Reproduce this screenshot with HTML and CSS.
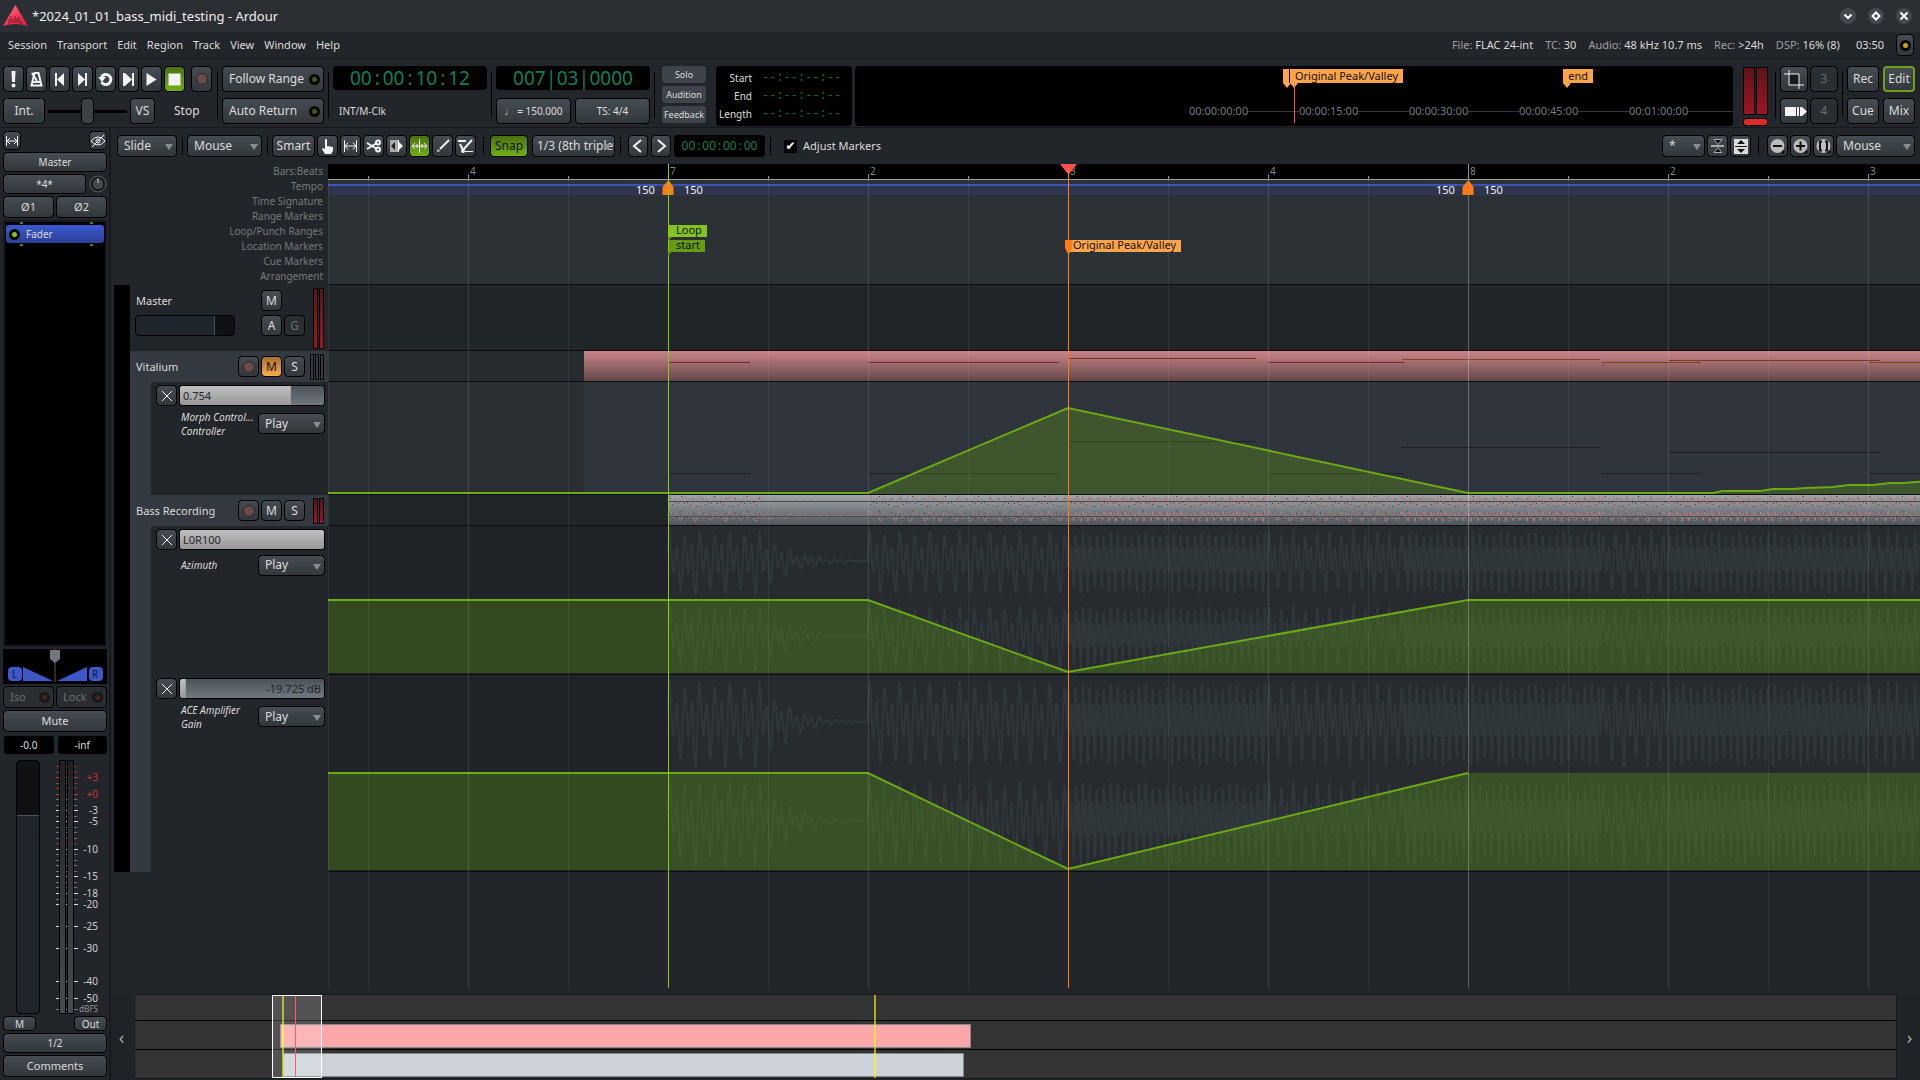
FILE: index.html
```html
<!DOCTYPE html>
<html lang="en">
<head>
    <meta charset="UTF-8">
    <meta name="viewport" content="width=device-width, initial-scale=1.0">
    <title>*2024_01_01_bass_midi_testing - Ardour</title>
    <link rel="stylesheet" href="styles.css">
</head>
<body>
    <header class="titlebar">
        <svg class="logo" width="25" height="22" viewBox="0 0 25 22">
            <defs>
                <linearGradient id="logoFill" x1="0" y1="0" x2="1" y2="1">
                    <stop offset="0" stop-color="#ff8c94"/>
                    <stop offset="0.5" stop-color="#f43a55"/>
                    <stop offset="1" stop-color="#c9213f"/>
                </linearGradient>
            </defs>
            <path d="M12.500 0L25 21Q12 17 0 21Z" fill="url(#logoFill)"/>
            <path d="M6 19v-5M8 18v-7M10 18v-4M12 18v-7M14 18v-5M16 18v-6M18 19v-3" stroke="#7d1528" stroke-width="1"/>
        </svg>
        <h1>*2024_01_01_bass_midi_testing - Ardour</h1>
        <div class="window-buttons">
            <button aria-label="Minimize"><svg width="16" height="16"><path d="M4.500 6.500L8 10l3.500-3.500"/></svg></button>
            <button aria-label="Maximize"><svg width="16" height="16"><path d="M8 4.500L11.500 8 8 11.500 4.500 8Z"/></svg></button>
            <button aria-label="Close"><svg width="16" height="16"><path d="M4.500 4.500l7 7M11.500 4.500l-7 7"/></svg></button>
        </div>
    </header>

    <div class="menubar">
        <nav>
            <a href="#">Session</a>
            <a href="#">Transport</a>
            <a href="#">Edit</a>
            <a href="#">Region</a>
            <a href="#">Track</a>
            <a href="#">View</a>
            <a href="#">Window</a>
            <a href="#">Help</a>
        </nav>
        <div class="status">
            <span><i>File:</i> FLAC 24-int</span>
            <span><i>TC:</i> 30</span>
            <span><i>Audio:</i> 48 kHz 10.7 ms</span>
            <span><i>Rec:</i> &gt;24h</span>
            <span><i>DSP:</i> 16% (8)</span>
            <span class="wall-clock">03:50</span>
            <button class="btn log-btn" aria-label="Log"><span class="led yellow"></span></button>
        </div>
    </div>

    <section class="transport">
        <div class="stack transport-main">
            <div class="line transport-buttons">
                <button class="btn ico" aria-label="Panic"><svg width="20" height="24"><path class="w" d="M7.500 4h4l-.5 11h-3z"/><circle class="w" cx="9.500" cy="18.500" r="2"/></svg></button>
                <button class="btn ico" aria-label="Metronome"><svg width="20" height="24"><path class="s2" d="M4.500 18.500L7.500 6h4l3 12.500zM6 15h7M10 14L5 6"/></svg></button>
                <button class="btn ico" aria-label="Go to start"><svg width="20" height="24"><path class="w" d="M5 6h2v13H5zM14 6v13l-7-6.500z"/></svg></button>
                <button class="btn ico" aria-label="Go to end"><svg width="20" height="24"><path class="w" d="M12 6h2v13h-2zM5 6v13l7-6.500z"/></svg></button>
                <button class="btn ico" aria-label="Loop"><svg width="20" height="24"><path class="s3" d="M5.500 10a5 5 0 1 1 0 5"/><path class="w" d="M2 10h8l-4 5z"/></svg></button>
                <button class="btn ico" aria-label="Play range"><svg width="20" height="24"><path class="w" d="M4 6h2v13H4zM13 6h2v13h-2zM6 6v13l7-6.500z"/></svg></button>
                <button class="btn ico" aria-label="Play"><svg width="20" height="24"><path class="w" d="M4.500 6v13L14.500 12.500z"/></svg></button>
                <button class="btn ico on" aria-label="Stop"><svg width="20" height="24"><path class="w" d="M3.500 6.500h12v12h-12z"/></svg></button>
                <button class="btn ico rec" aria-label="Record"><span class="rec-dot"></span></button>
            </div>
            <div class="line">
                <button class="btn int">Int.</button>
                <input class="shuttle" type="range" aria-label="Shuttle">
                <button class="btn vs">VS</button>
                <span class="state">Stop</span>
            </div>
        </div>
        <div class="sep"></div>
        <div class="stack follow">
            <button class="btn led-btn">Follow Range<span class="led dim"></span></button>
            <button class="btn led-btn">Auto Return<span class="led dim"></span></button>
        </div>
        <div class="sep"></div>
        <div class="stack clock-col">
            <div class="clock big"><b>00</b><b>:</b><b>00</b><b>:</b><b>10</b><b>:</b><b>12</b></div>
            <span class="sync">INT/M-Clk</span>
        </div>
        <div class="sep"></div>
        <div class="stack clock-col">
            <div class="clock big"><b>007</b><b>|</b><b>03</b><b>|</b><b>0000</b></div>
            <div class="line">
                <button class="btn small wide">♩ = 150.000</button>
                <button class="btn small wide">TS: 4/4</button>
            </div>
        </div>
        <div class="sep"></div>
        <div class="alerts">
            <button>Solo</button>
            <button>Audition</button>
            <button>Feedback</button>
        </div>
        <dl class="punch">
            <dt>Start</dt><dd>--:--:--:--</dd>
            <dt>End</dt><dd>--:--:--:--</dd>
            <dt>Length</dt><dd>--:--:--:--</dd>
        </dl>
        <div class="timeline-overview">
            <div class="ticks">
                <span>00:00:00:00</span>
                <span>00:00:15:00</span>
                <span>00:00:30:00</span>
                <span>00:00:45:00</span>
                <span>00:01:00:00</span>
            </div>
            <span class="flag stub" style="right: 444px"></span>
            <span class="flag" style="right: 330px">Original Peak/Valley</span>
            <span class="flag" style="right: 140px">end</span>
            <span class="playhead-mini"></span>
        </div>
        <div class="master-meter">
            <span></span><span></span>
            <button aria-label="Reset peak"></button>
        </div>
        <div class="sep"></div>
        <div class="square-grid">
            <button class="btn" aria-label="Crop"><svg width="26" height="24"><path fill="#181a1c" d="M8 7h10v11H8z"/><path class="s1" d="M8 3v15h15M3 7h15v15"/></svg></button>
            <button class="btn off">3</button>
            <button class="btn" aria-label="Range"><svg width="26" height="24"><path class="w" d="M4 8h11v9H4zM16 8h2v9h-2zM19 8h2v9h-2zM21 8l5 4.500-5 4.500z"/></svg></button>
            <button class="btn off">4</button>
        </div>
        <div class="sep"></div>
        <div class="mode-grid">
            <button class="btn">Rec</button>
            <button class="btn current">Edit</button>
            <button class="btn">Cue</button>
            <button class="btn">Mix</button>
        </div>
    </section>

    <div class="workspace">
        <aside class="strip">
            <div class="line spread">
                <button class="btn tiny" aria-label="Width"><svg width="16" height="16"><path class="s1" d="M2.500 3v10M13.500 3v10M3 8h10M6 5L3 8l3 3M10 5l3 3-3 3"/></svg></button>
                <button class="btn tiny" aria-label="Hide"><svg width="16" height="16"><path class="s1" d="M1 8q7-8 14 0-7 8-14 0M2 14L14 2"/><circle class="s1" cx="8" cy="8" r="2"/></svg></button>
            </div>
            <button class="btn h20">Master</button>
            <div class="line trim">
                <button class="btn h20">*4*</button>
                <svg width="18" height="18"><circle cx="9" cy="9" r="8" fill="none" stroke="#565b60" stroke-width="1"/><circle cx="9" cy="9" r="6" fill="#44494e" stroke="#000"/><path d="M9 3v5" stroke="#ccc"/></svg>
            </div>
            <div class="line halves">
                <button class="btn">Ø1</button>
                <button class="btn">Ø2</button>
            </div>
            <div class="processors">
                <div class="pins"><i></i><i></i></div>
                <button class="processor"><span class="led green"></span>Fader</button>
                <div class="pins"><i></i><i></i></div>
            </div>
            <svg class="panner" width="104" height="35">
                <path d="M52 0v33" stroke="#2a2a2a" stroke-width="2"/>
                <path d="M20 18L50 32H20zM84 18L54 32H84z" fill="#3e57c9"/>
                <rect x="5" y="18" width="14" height="14" rx="4" fill="#3e57c9"/>
                <rect x="86" y="18" width="14" height="14" rx="4" fill="#3e57c9"/>
                <path d="M47 1h10v9l-5 4-5-4z" fill="#70777e"/>
                <text x="9" y="29">L</text>
                <text x="89" y="29">R</text>
            </svg>
            <div class="line halves">
                <button class="btn off led-btn">Iso<span class="led red"></span></button>
                <button class="btn off led-btn">Lock<span class="led red"></span></button>
            </div>
            <button class="btn">Mute</button>
            <div class="line peaks">
                <output>-0.0</output>
                <output>-inf</output>
            </div>
            <div class="fader-row">
                <input type="range" class="main-fader" min="0" max="100" value="79" aria-label="Master gain">
                <svg class="meter-scale" id="meterScale" width="60" height="254"></svg>
            </div>
            <div class="line spread foot">
                <button class="btn mini">M</button>
                <button class="btn mini">Out</button>
            </div>
            <button class="btn h20">1/2</button>
            <button class="btn">Comments</button>
        </aside>

        <main class="editor">
            <div class="toolbar">
                <label class="dropdown slide"><select aria-label="Edit mode"><option>Slide</option></select></label>
                <div class="sep"></div>
                <label class="dropdown point"><select aria-label="Edit point"><option>Mouse</option></select></label>
                <div class="sep"></div>
                <div class="tools">
                    <button class="btn smart">Smart</button>
                    <button class="btn ico" aria-label="Grab"><svg width="20" height="20"><path class="w" d="M7 3h2v7l6 1v4l-2 3H7l-3-5 1-1 2 1z"/></svg></button>
                    <button class="btn ico" aria-label="Range"><svg width="20" height="20"><path class="s1" d="M3.500 4v12M15.500 4v12M4 10h11M7 6.500L4 10l3 3.500M12 6.500l3 3.500-3 3.500"/></svg></button>
                    <button class="btn ico" aria-label="Cut"><svg width="20" height="20"><path class="s2" d="M3 7l10 6M3 13l10-6"/><circle class="s2" cx="14" cy="6.500" r="2"/><circle class="s2" cx="14" cy="13.500" r="2"/></svg></button>
                    <button class="btn ico" aria-label="Stretch"><svg width="20" height="20"><path fill="#aaa" d="M3 4h8v12H3z"/><path fill="#222" d="M4 10l4-4v8z"/><path class="w" d="M11 4h1v12h-1zM12 6l4 4-4 4z"/></svg></button>
                    <button class="btn ico on" aria-label="Internal edit"><svg width="20" height="20"><path class="s1" d="M9.500 3v14M2 10h15M5 7l-3 3 3 3M14 7l3 3-3 3M7 8v4M12 8v4"/></svg></button>
                    <button class="btn ico" aria-label="Draw"><svg width="20" height="20"><path class="s2" d="M7 13l9-9"/><path class="w" d="M4 16l1-3 2 2z"/></svg></button>
                    <button class="btn ico" aria-label="Automation"><svg width="20" height="20"><path class="s2" d="M2 5h8M4 8l3 6 9-10"/><path class="s1" d="M9 15.500h8"/><circle class="w" cx="7" cy="15" r="2"/></svg></button>
                </div>
                <div class="sep"></div>
                <button class="btn on snap">Snap</button>
                <label class="dropdown snap-grid"><select aria-label="Grid"><option>1/3 (8th triplet</option></select></label>
                <div class="sep"></div>
                <div class="nudge">
                    <button class="btn" aria-label="Nudge back"><svg width="18" height="20"><path class="s2" d="M12 4l-7 6 7 6"/></svg></button>
                    <button class="btn" aria-label="Nudge forward"><svg width="18" height="20"><path class="s2" d="M6 4l7 6-7 6"/></svg></button>
                    <div class="clock"><b>00</b><b>:</b><b>00</b><b>:</b><b>00</b><b>:</b><b>00</b></div>
                </div>
                <div class="sep"></div>
                <label class="check"><input type="checkbox" checked>Adjust Markers</label>
                <div class="toolbar-right">
                    <label class="dropdown star"><select aria-label="Visible tracks"><option>*</option></select></label>
                    <button class="btn ico" aria-label="Shrink tracks"><svg width="20" height="20"><path fill="#aaa" d="M3 9h13v2H3z"/><path fill="#111" stroke="#aaa" d="M6 3.500h8l-4 5zM6 16.500h8l-4-5z"/></svg></button>
                    <button class="btn ico" aria-label="Expand tracks"><svg width="20" height="20"><path fill="#ddd" d="M3 3h14v15H3z"/><path fill="#111" d="M6 8h8l-4-4zM6 13h8l-4 4zM4 10h12v1H4z"/></svg></button>
                    <div class="sep"></div>
                    <button class="btn ico" aria-label="Zoom out"><svg width="20" height="20"><path stroke="#111" stroke-width="3" d="M13 14l3 3"/><circle cx="9.500" cy="10" r="7" fill="#bbb"/><path stroke="#111" stroke-width="2" d="M5 10h9"/></svg></button>
                    <button class="btn ico" aria-label="Zoom in"><svg width="20" height="20"><path stroke="#111" stroke-width="3" d="M13 14l3 3"/><circle cx="9.500" cy="10" r="7" fill="#bbb"/><path stroke="#111" stroke-width="2" d="M5 10h9M9.500 5.500v9"/></svg></button>
                    <button class="btn ico" aria-label="Zoom to session"><svg width="20" height="20"><path stroke="#111" stroke-width="3" d="M13 14l3 3"/><circle cx="9.500" cy="10" r="7" fill="#bbb"/><path stroke="#111" stroke-width="2" fill="none" d="M8 5.500H6v9h2M11 5.500h2v9h-2"/></svg></button>
                    <label class="dropdown focus"><select aria-label="Zoom focus"><option>Mouse</option></select></label>
                </div>
            </div>

            <div class="canvas">
                <div class="row rulers">
                    <div class="head ruler-names">
                        <span>Bars:Beats</span>
                        <span>Tempo</span>
                        <span>Time Signature</span>
                        <span>Range Markers</span>
                        <span>Loop/Punch Ranges</span>
                        <span>Location Markers</span>
                        <span>Cue Markers</span>
                        <span>Arrangement</span>
                    </div>
                    <div class="lane">
                        <div class="bars"></div>
                        <div class="tempo"></div>
                    </div>
                </div>

                <div class="row master">
                    <div class="head tabbed">
                        <div class="track-title">
                            <span class="name">Master</span>
                            <button class="btn sq last">M</button>
                        </div>
                        <div class="track-title second">
                            <input type="range" class="track-fader" aria-label="Master fader">
                            <button class="btn sq">A</button>
                            <button class="btn sq off">G</button>
                        </div>
                        <div class="meters hot"><i></i><i></i></div>
                    </div>
                    <div class="lane"></div>
                </div>

                <div class="row track">
                    <div class="head tabbed selected">
                        <div class="track-title">
                            <span class="name">Vitalium</span>
                            <button class="btn sq" aria-label="Record enable"><span class="rec-dot"></span></button>
                            <button class="btn sq muted">M</button>
                            <button class="btn sq">S</button>
                        </div>
                        <div class="meters"><i></i><i></i><i></i></div>
                    </div>
                    <div class="lane vitalium">
                        <svg id="midiLane"></svg>
                    </div>
                </div>

                <div class="row morph">
                    <div class="head tabbed selected">
                        <div class="auto">
                            <button class="btn sq" aria-label="Hide lane"><svg width="18" height="18"><path class="s1" d="M4 4l10 10M14 4L4 14"/></svg></button>
                            <input type="text" class="value" style="--fill: 77%" value="0.754" aria-label="Morph Control value">
                            <p>Morph Control...<br>Controller</p>
                            <label class="dropdown"><select aria-label="Morph automation mode"><option>Play</option></select></label>
                        </div>
                    </div>
                    <div class="lane">
                        <svg id="morphLane"></svg>
                    </div>
                </div>

                <div class="row track">
                    <div class="head tabbed selected">
                        <div class="track-title">
                            <span class="name">Bass Recording</span>
                            <button class="btn sq" aria-label="Record enable"><span class="rec-dot"></span></button>
                            <button class="btn sq">M</button>
                            <button class="btn sq">S</button>
                        </div>
                        <div class="meters hot"><i></i><i></i></div>
                    </div>
                    <div class="lane">
                        <svg id="bassLane"></svg>
                    </div>
                </div>

                <div class="row azimuth">
                    <div class="head tabbed selected">
                        <div class="auto one-line">
                            <button class="btn sq" aria-label="Hide lane"><svg width="18" height="18"><path class="s1" d="M4 4l10 10M14 4L4 14"/></svg></button>
                            <input type="text" class="value" style="--fill: 100%" value="L0R100" aria-label="Azimuth value">
                            <p>Azimuth</p>
                            <label class="dropdown"><select aria-label="Azimuth automation mode"><option>Play</option></select></label>
                        </div>
                    </div>
                    <div class="lane">
                        <svg id="azimuthLane"></svg>
                    </div>
                </div>

                <div class="row gain">
                    <div class="head tabbed selected">
                        <div class="auto">
                            <button class="btn sq" aria-label="Hide lane"><svg width="18" height="18"><path class="s1" d="M4 4l10 10M14 4L4 14"/></svg></button>
                            <input type="text" class="value right" style="--fill: 4%" value="-19.725 dB" aria-label="Amplifier gain value">
                            <p>ACE Amplifier<br>Gain</p>
                            <label class="dropdown"><select aria-label="Gain automation mode"><option>Play</option></select></label>
                        </div>
                    </div>
                    <div class="lane">
                        <svg id="gainLane"></svg>
                    </div>
                </div>

                <!-- grid, markers and playhead lie over all lanes -->
                <div class="overlay" id="overlay">
                    <svg id="gridLines"></svg>
                    <span class="tempo-label before" style="--x: 340px">150</span>
                    <span class="tempo-label" style="--x: 340px">150</span>
                    <span class="tempo-label before" style="--x: 1140px">150</span>
                    <span class="tempo-label" style="--x: 1140px">150</span>
                    <span class="marker loop" style="--x: 340px">Loop</span>
                    <span class="marker start" style="--x: 340px">start</span>
                    <span class="marker location" style="--x: 740px">Original Peak/Valley</span>
                    <svg class="top" id="playhead"></svg>
                </div>
            </div>

            <div class="summary">
                <button aria-label="Scroll left">‹</button>
                <div class="map">
                    <div></div>
                    <div><span class="clip pink"></span></div>
                    <div><span class="clip pale"></span></div>
                    <i class="edge" style="left: 147px"></i>
                    <i class="edge" style="left: 739px"></i>
                    <i class="now"></i>
                    <span class="view"></span>
                </div>
                <button aria-label="Scroll right">›</button>
            </div>
        </main>
    </div>

    <script src="script.js"></script>
</body>
</html>
```
FILE: styles.css
```css
* {
    box-sizing: border-box;
}

body {
    margin: 0;
    height: 100vh;
    display: flex;
    flex-direction: column;
    overflow: hidden;
    background: #222529;
    color: #dcdcdc;
    font: 12px/16px "Noto Sans", sans-serif;
}

button, input, select {
    font: inherit;
    color: inherit;
    margin: 0;
    padding: 0;
    border: 0;
}

a {
    color: inherit;
    text-decoration: none;
}

svg {
    display: block;
}

.w { fill: #f2f2f2; }
.s1, .s2, .s3 { fill: none; stroke: #f2f2f2; stroke-width: 1; }
.s2 { stroke-width: 2; }
.s3 { stroke-width: 3; }

/* title and menu */

.titlebar {
    display: flex;
    align-items: center;
    height: 32px;
    flex: none;
    padding: 0 8px 0 3px;
    background: #2b2e32;
}

.titlebar h1 {
    flex: 1;
    margin: 0 0 0 4px;
    font-size: 13px;
    font-weight: 400;
    color: #f0f0f0;
}

.window-buttons {
    display: flex;
    gap: 12px;
}

.window-buttons button {
    width: 16px;
    height: 16px;
    border-radius: 8px;
    background: #42484d;
}

.window-buttons path {
    fill: none;
    stroke: #fff;
    stroke-width: 2;
}

.menubar {
    display: flex;
    justify-content: space-between;
    align-items: center;
    height: 27px;
    flex: none;
    padding: 0 6px 0 8px;
    border-bottom: 1px solid #15171a;
    font-size: 11px;
}

.menubar nav {
    display: flex;
    gap: 10px;
}

.status {
    display: flex;
    align-items: center;
    gap: 12px;
}

.status i {
    font-style: normal;
    color: #a0a0a0;
}

.wall-clock {
    margin-left: 4px;
}

.log-btn {
    width: 18px;
    height: 22px;
}

/* buttons */

.btn {
    display: flex;
    align-items: center;
    justify-content: center;
    height: 22px;
    border: 1px solid #000;
    border-radius: 4px;
    background: linear-gradient(#464c53, #32373b);
    white-space: nowrap;
}

.btn.on {
    background: linear-gradient(#49720f, #70b016);
    color: #111;
}

.btn.off {
    background: #2a2e31;
    color: #6a6e72;
}

.btn.muted {
    background: linear-gradient(#a8702f, #ffa94d);
    color: #111;
}

.btn.current {
    border: 2px solid #6da01c;
}

.btn.small {
    font-size: 10px;
}

.btn.tiny {
    width: 18px;
    height: 19px;
}

.btn.sq {
    flex: none;
    width: 21px;
    height: 21px;
}

.rec-dot {
    width: 12px;
    height: 12px;
    border: 1px solid #2a2020;
    border-radius: 6px;
    background: #6b4c4c;
}

.led-btn {
    justify-content: space-between;
    padding: 0 3px 0 6px;
}

.led {
    width: 11px;
    height: 11px;
    border: 3px solid #050505;
    border-radius: 6px;
    background: #3f5e10;
}

.led.yellow { background: #d0a800; }
.led.green { background: #86c81c; }
.led.red { background: #4a2224; border-color: #181818; }

.sep {
    flex: none;
    width: 1px;
    background: #000;
}

.line {
    display: flex;
    align-items: center;
}

.spread {
    justify-content: space-between;
}

.dropdown {
    position: relative;
    display: block;
    height: 22px;
}

.dropdown select {
    width: 100%;
    height: 100%;
    padding: 0 6px;
    appearance: none;
    border: 1px solid #000;
    border-radius: 4px;
    background: linear-gradient(#464c53, #32373b);
}

.dropdown::after {
    content: "";
    position: absolute;
    right: 4px;
    top: 9px;
    border: 4px solid transparent;
    border-top: 6px solid #8a8d90;
    border-bottom: 0;
    pointer-events: none;
}

/* transport */

.transport {
    display: flex;
    flex: none;
    height: 69px;
    padding: 7px 5px 3px 3px;
    border-bottom: 1px solid #15171a;
}

.transport .sep {
    height: 46px;
    margin: 6px 4px 0;
}

.transport .btn {
    height: 26px;
}

.stack {
    display: flex;
    flex-direction: column;
    gap: 6px;
}

.transport-main {
    width: 210px;
}

.transport-buttons {
    gap: 2px;
}

.ico {
    width: 21px;
}

.transport-buttons .rec {
    margin-left: 4px;
}

.int { width: 42px; }
.vs { width: 25px; }

.shuttle {
    width: 79px;
    height: 26px;
    margin: 0 3px;
    appearance: none;
    background: linear-gradient(#000, #000) center / 100% 3px no-repeat;
}

.shuttle::-webkit-slider-thumb {
    appearance: none;
    width: 13px;
    height: 26px;
    border: 1px solid #000;
    border-radius: 4px;
    background: #3c4147;
}

.state {
    margin-left: 19px;
}

.follow {
    width: 102px;
}

.clock-col {
    width: 154px;
}

.clock {
    display: flex;
    align-items: center;
    justify-content: center;
    border-radius: 4px;
    background: #000;
    color: #0e7f5c;
}

.clock b {
    font-weight: 400;
    min-width: 7px;
    text-align: center;
}

.clock.big {
    height: 24px;
    font-size: 19px;
}

.clock.big b {
    min-width: 11px;
}

.sync {
    margin: 7px 0 0 6px;
    font-size: 10px;
}

.clock-col .clock + .line {
    gap: 4px;
    margin-top: 2px;
}

.wide {
    flex: 1;
}

.alerts {
    display: flex;
    flex-direction: column;
    gap: 3px;
    width: 44px;
    margin-left: 3px;
}

.alerts button {
    height: 17px;
    border-radius: 3px;
    background: #3f444a;
    font-size: 9px;
}

.punch {
    display: grid;
    grid-template-columns: 36px 1fr;
    column-gap: 10px;
    align-items: center;
    width: 136px;
    height: 60px;
    margin: 0 3px 0 10px;
    padding: 3px 0;
    border-radius: 4px;
    background: #000;
    font-size: 10px;
}

.punch dt {
    text-align: right;
}

.punch dd {
    margin: 0;
    font: 12px/16px "Liberation Mono", monospace;
    color: #0b6b4d;
}

.timeline-overview {
    position: relative;
    flex: 1;
    height: 60px;
    border-radius: 4px;
    background: #000;
    overflow: hidden;
}

.timeline-overview .ticks {
    display: flex;
    justify-content: flex-end;
    margin-top: 37px;
    color: #75797c;
    font-size: 11px;
}

.ticks span {
    display: flex;
    align-items: center;
    width: 110px;
}

.ticks span:last-child {
    width: 104px;
}

.ticks span::after {
    content: "";
    flex: 1;
    height: 1px;
    background: #33373a;
}

.flag {
    position: absolute;
    top: 3px;
    height: 14px;
    padding: 0 5px;
    background: #ffa44a;
    color: #111;
    font-size: 11px;
    line-height: 13px;
}

.flag::after {
    content: "";
    position: absolute;
    left: 0;
    top: 14px;
    border: 4px solid transparent;
    border-top: 5px solid #ffa44a;
    border-bottom: 0;
}

.flag.stub {
    width: 6px;
    padding: 0;
}

.playhead-mini {
    position: absolute;
    right: 438px;
    top: 19px;
    width: 1px;
    height: 38px;
    background: #ff524e;
}

.master-meter {
    display: grid;
    grid-template: 48px 8px / 12px 12px;
    gap: 3px 1px;
    margin: 1px 3px 0 10px;
}

.master-meter span {
    border: 1px solid #000;
    background: linear-gradient(#5c1418, #a01424);
}

.master-meter button {
    grid-column: span 2;
    border: 1px solid #000;
    border-radius: 3px;
    background: #e02a2a;
}

.square-grid, .mode-grid {
    display: grid;
    grid-template-columns: 28px 28px;
    gap: 6px 2px;
    align-content: start;
}

.mode-grid {
    grid-template-columns: 32px 32px;
    gap: 6px 4px;
}

/* mixer strip */

.workspace {
    display: flex;
    flex: 1;
    min-height: 0;
}

.strip {
    display: flex;
    flex-direction: column;
    gap: 2px;
    width: 111px;
    flex: none;
    padding: 3px 2px 3px 3px;
    border-right: 2px solid #17191c;
    font-size: 11px;
}

.strip .h20 {
    height: 20px;
    font-size: 10px;
}

.trim .btn {
    flex: 1;
    margin-right: 3px;
}

.halves {
    gap: 2px;
}

.halves .btn {
    flex: 1;
    min-width: 0;
}

.processors {
    flex: 1;
    display: flex;
    flex-direction: column;
    gap: 1px;
    padding: 0 1px;
    border: 2px solid #17191c;
    background: #000;
}

.pins {
    display: flex;
    justify-content: space-between;
    padding: 0 11px 0 14px;
}

.pins i {
    width: 3px;
    height: 2px;
    background: #4a8a10;
}

.processor {
    display: flex;
    align-items: center;
    gap: 6px;
    height: 18px;
    padding: 0 3px;
    border-radius: 3px;
    background: linear-gradient(#3a59d0, #2b3f96);
    font-size: 10px;
}

.panner {
    background: #000;
    fill: #0c1640;
    font-size: 10px;
}

.peaks {
    gap: 4px;
    padding: 2px 0 0 1px;
}

.peaks output {
    flex: 1;
    height: 18px;
    border-radius: 3px;
    background: #000;
    font-size: 10px;
    line-height: 18px;
    text-align: center;
}

.fader-row {
    display: flex;
    gap: 12px;
    padding: 4px 0 0 13px;
}

.main-fader {
    width: 24px;
    height: 254px;
    appearance: none;
    writing-mode: vertical-lr;
    direction: rtl;
    border: 1px solid #000;
    border-radius: 4px;
    background: linear-gradient(#101112 54px, #4a525c 54px, #4a525c 55px, #20252c 55px);
}

.main-fader::-webkit-slider-thumb, .track-fader::-webkit-slider-thumb {
    appearance: none;
    width: 1px;
    height: 1px;
}

.meter-scale {
    font-size: 10px;
}

.btn.mini {
    width: 33px;
    height: 15px;
    font-size: 10px;
}

/* editor toolbar */

.editor {
    display: flex;
    flex-direction: column;
    flex: 1;
    min-width: 0;
}

.toolbar {
    display: flex;
    gap: 4px;
    height: 36px;
    flex: none;
    padding: 7px 5px 0 6px;
}

.toolbar .sep {
    height: 18px;
    margin: 2px 0 0 1px;
}

.slide { width: 60px; }
.point { width: 75px; }
.smart { width: 43px; }
.snap { width: 38px; margin-left: 2px; }
.snap-grid { width: 83px; }
.star { width: 43px; }
.focus { width: 79px; }

.snap-grid select {
    padding: 0 0 0 4px;
}

.tools {
    display: flex;
    gap: 2px;
    margin-right: 2px;
}

.nudge {
    display: flex;
    gap: 3px;
    margin-left: 3px;
}

.nudge .btn {
    width: 20px;
}

.nudge .clock {
    width: 91px;
    height: 22px;
}

.check {
    display: flex;
    align-items: center;
    gap: 6px;
    height: 22px;
    margin-left: 9px;
    font-size: 11px;
}

.check input {
    appearance: none;
    width: 13px;
    height: 13px;
    background: #000;
}

.check input:checked::before {
    content: "✔";
    display: block;
    font: 12px/13px "DejaVu Sans", sans-serif;
    color: #fff;
    text-align: center;
}

.toolbar-right {
    display: flex;
    gap: 2px;
    margin-left: auto;
}

.toolbar-right .sep {
    margin: 2px 6px 0 5px;
}

/* canvas */

.canvas {
    position: relative;
    flex: 1;
    min-height: 0;
    padding-left: 3px;
}

.row {
    display: grid;
    grid-template-columns: 214px 1fr;
}

.rulers { height: 121px; }
.master { height: 66px; }
.track { height: 31px; }
.morph { height: 113px; }
.azimuth { height: 149px; }
.gain { height: 197px; }

.lane {
    border-bottom: 1px solid #0c0d0e;
    background: #202528;
    overflow: hidden;
}

.lane svg {
    width: 100%;
    height: 100%;
}

.rulers .lane { background: #2c3135; }
.lane.vitalium { background: #262b2f; }
.morph .lane { background: #2b2f33; }
.azimuth .lane, .gain .lane { background: #202327; }

.bars {
    height: 16px;
    border-bottom: 1px solid #a0a0a0;
    background: #000;
}

.tempo {
    height: 11px;
    margin-top: 4px;
    border-top: 2px solid #3c54b8;
    background: #2f354f;
}

.ruler-names {
    display: flex;
    flex-direction: column;
    padding-right: 5px;
    color: #777b7e;
    font-size: 10px;
    line-height: 15px;
    text-align: right;
}

.head {
    position: relative;
    overflow: hidden;
}

.tabbed {
    border-left: 16px solid #000;
}

.selected {
    background: #343840;
}

.track-title {
    display: flex;
    align-items: center;
    gap: 2px;
    padding: 5px 23px 0 6px;
}

.track-title .name {
    flex: 1;
    font-size: 11px;
}

.track-title .last {
    margin-right: 23px;
}

.track-title.second {
    padding-top: 4px;
    padding-left: 5px;
}

.track-fader {
    width: 100px;
    height: 21px;
    margin-right: auto;
    appearance: none;
    border: 1px solid #000;
    border-radius: 4px;
    background: linear-gradient(90deg, #20262c 78px, #4a525c 78px, #4a525c 79px, #101112 79px);
}

.meters {
    position: absolute;
    right: 4px;
    top: 3px;
    bottom: 2px;
    display: flex;
    gap: 1px;
}

.meters i {
    width: 4px;
    border: 1px solid #000;
    background: #363b41;
}

.meters.hot i {
    width: 5px;
    background: linear-gradient(#5c1418, #a01424);
}

.auto {
    display: grid;
    grid-template-columns: 21px 77px 67px;
    grid-template-rows: 21px 35px;
    gap: 0 2px;
    align-items: center;
    height: 100%;
    margin-left: 21px;
    padding: 3px 3px 0 5px;
    align-content: start;
    background: #222529;
}

.auto.one-line {
    grid-template-rows: 21px 30px;
}

.auto .value {
    grid-column: 2 / 4;
    height: 21px;
    padding: 0 3px;
    border: 1px solid #000;
    border-radius: 3px;
    background: linear-gradient(#c0c0c0, #989898) 0 0 / var(--fill) 100% no-repeat, linear-gradient(#4a525a, #707880);
    color: #26262c;
    font-size: 11px;
    min-width: 0;
}

.auto .value.right {
    text-align: right;
}

.auto p {
    grid-column: 2;
    margin: 0;
    padding-left: 2px;
    font-size: 10px;
    line-height: 14px;
    font-style: italic;
    white-space: nowrap;
}

.auto .dropdown {
    height: 21px;
}

.overlay {
    position: absolute;
    left: 217px;
    right: 0;
    top: 0;
    bottom: 0;
    overflow: hidden;
    pointer-events: none;
}

.overlay > svg {
    position: absolute;
    left: 0;
    top: 0;
    width: 100%;
    height: 100%;
    fill: #85898c;
    font-size: 10px;
}

.tempo-label {
    position: absolute;
    left: calc(var(--x) + 16px);
    top: 18px;
    font-size: 11px;
    color: #f0f0f0;
}

.tempo-label.before {
    left: calc(var(--x) - 32px);
}

.marker {
    position: absolute;
    left: var(--x);
    height: 12px;
    padding: 0 5px 0 8px;
    color: #111;
    font-size: 11px;
    line-height: 10px;
}

.marker.loop { top: 61px; background: #84c41e; }
.marker.start { top: 76px; background: #649c12; }
.marker.location { top: 76px; padding-left: 5px; background: #ffa44a; }

/* session summary */

.summary {
    display: flex;
    flex: none;
    height: 92px;
    padding: 6px 0 1px;
    gap: 2px;
}

.summary button {
    width: 21px;
    background: #1e2125;
    color: #aaa;
    font-size: 18px;
}

.map {
    position: relative;
    flex: 1;
    display: grid;
    grid-template-rows: repeat(3, 1fr);
    gap: 1px;
    border: 1px solid #17191c;
    background: #000;
}

.map div {
    padding: 3px 0 1px;
    background: #333;
}

.clip {
    display: block;
    height: 24px;
    border: 1px solid #888;
}

.clip.pink { margin-left: 145px; width: 691px; background: #fca8aa; }
.clip.pale { margin-left: 148px; width: 681px; background: #cdd2da; }

.map i, .view {
    position: absolute;
    top: 0;
    bottom: 0;
}

.edge {
    width: 2px;
    background: #ffff00;
    opacity: 0.6;
}

.now {
    left: 160px;
    width: 1px;
    background: #ff4040;
}

.view {
    left: 137px;
    width: 50px;
    border: 1px solid #fff;
    background: rgba(255, 255, 255, 0.16);
}
```
FILE: script.js
```js
const NS = 'http://www.w3.org/2000/svg';

function add(parent, name, attrs, text) {
    const node = document.createElementNS(NS, name);
    for (const key in attrs) node.setAttribute(key, attrs[key]);
    if (text) node.textContent = text;
    parent.appendChild(node);
    return node;
}

const byId = id => document.getElementById(id);
const LANE_END = byId('overlay').clientWidth;
const REGION_START = 340;

// beat grid: one beat is 200px, a bar starts at 340 and 1140
const grid = byId('gridLines');
add(grid, 'path', { d: 'M.5 16V824', stroke: 'rgba(255,255,255,.08)' });
for (let x = 40; x < LANE_END; x += 100) {
    const beat = (x - 140) % 200 === 0;
    const bar = (x - 340) % 800 === 0;
    add(grid, 'path', {
        d: `M${x + 0.5} ${bar ? 0 : 16}V824`,
        stroke: bar ? 'rgba(255,255,255,.28)' : beat ? 'rgba(255,255,255,.12)' : 'rgba(255,255,255,.06)'
    });
    add(grid, 'path', { d: `M${x + 0.5} ${bar ? 0 : beat ? 10 : 12}V16`, stroke: '#909090' });
    if (beat) {
        const n = (((x - 340) / 200) % 4 + 4) % 4;
        add(grid, 'text', { x: x + 2, y: 11 }, n === 0 ? String(7 + (x - 340) / 800) : String(n + 1));
    }
}

// tempo markers, location pin, playhead
const front = byId('playhead');
[340, 1140].forEach(x => {
    add(front, 'path', { d: `M${x + 0.5} 16l5 7v8h-11v-8z`, fill: '#ff7b16' });
});
add(front, 'path', { d: 'M340.5 0V824', stroke: '#84cc1e' });
add(front, 'path', { d: 'M340 73h4l-4 4zM340 87h4l-4 5z', fill: '#649c12' });
add(front, 'path', { d: 'M737 76h7v8l-3 6h-1l-3-6z', fill: '#ff7b16' });
add(front, 'path', { d: 'M732 0h17l-8 10h-1z', fill: '#ff524e' });
add(front, 'path', { d: 'M740.5 4V824', stroke: '#ff7b16' });

// midi region and its notes: [from, to, y in track, y in automation lane, colour]
const notes = [
    [340, 422, 11, 91, '#7b2a2a'],
    [540, 731, 11, 91, '#7b2a2a'],
    [741, 928, 7, 59, '#7b2a2a'],
    [940, 1077, 11, 91, '#7b2a2a'],
    [1074, 1272, 8, 65, '#7d4a2a'],
    [1274, 1373, 11, 91, '#7d4210'],
    [1341, 1552, 9, 70, '#7d3a20'],
    [1541, 1700, 11, 91, '#7d4210']
];
const midi = byId('midiLane');
const grad = add(add(midi, 'defs', {}), 'linearGradient', { id: 'pinkFill', x2: 0, y2: 1 });
add(grad, 'stop', { offset: 0, 'stop-color': '#c88588' });
add(grad, 'stop', { offset: 1, 'stop-color': '#654648' });
add(midi, 'rect', { x: 256, y: 0, width: LANE_END, height: 30, fill: 'url(#pinkFill)' });
notes.forEach(n => add(midi, 'path', { d: `M${n[0]} ${n[2] + 0.5}H${n[1]}`, stroke: n[4] }));

function automation(svg, points, base, lineCount) {
    const pts = points.map(p => p.join(' '));
    add(svg, 'path', { d: `M${pts.join('L')}V${base}H0Z`, fill: 'rgba(90,150,20,.35)' });
    const line = pts.slice(0, lineCount || pts.length);
    add(svg, 'path', { d: `M${line.join('L')}`, fill: 'none', stroke: '#6aaa14', 'stroke-width': 2 });
}

const morph = byId('morphLane');
add(morph, 'rect', { x: 256, y: 0, width: LANE_END, height: 112, fill: '#30343c' });
notes.forEach(n => add(morph, 'path', { d: `M${n[0]} ${n[3] + 0.5}H${n[1]}`, stroke: '#1c1e20' }));
automation(morph, [
    [0, 111], [540, 111], [740, 26], [1140, 111], [1386, 111], [1394, 109], [1432, 109],
    [1445, 107], [1465, 107], [1478, 106], [1505, 105], [1520, 103], [1545, 103], [1562, 101], [1575, 101], [1600, 99]
], 112);

// bass recording: pulse length per note, first note dies out
const sections = [
    [340, 540, 15], [540, 740, 15], [740, 940, 7], [940, 1074, 12],
    [1074, 1274, 7], [1274, 1341, 12], [1341, 1541, 7], [1541, LANE_END, 9]
];

function wave(centre, amp) {
    let d = '';
    sections.forEach((s, i) => {
        for (let x = s[0]; x < s[1]; x += 0.5) {
            const t = x - s[0];
            const p = 2 * Math.PI * t / s[2];
            const fade = i === 0 && t > 95 ? Math.max(0, Math.exp(-(t - 95) / 32) - 0.04) : 1;
            const env = fade * (0.9 + 0.1 * Math.sin(x * 0.21));
            // every pulse swings out twice, the second time less far
            const v = env * (0.45 * Math.sin(p) + 0.75 * Math.sin(2 * p + 0.4));
            d += `${d ? 'L' : 'M'}${x} ${(centre - v * amp).toFixed(1)}`;
        }
    });
    return d;
}

function drawWave(svg, centre, amp, colour, width) {
    add(svg, 'path', { d: wave(centre, amp), fill: 'none', stroke: colour, 'stroke-width': width });
}

const bass = byId('bassLane');
const grey = add(add(bass, 'defs', {}), 'linearGradient', { id: 'greyFill', x2: 0, y2: 1 });
add(grey, 'stop', { offset: 0, 'stop-color': '#a0a6aa' });
add(grey, 'stop', { offset: 1, 'stop-color': '#505659' });
add(bass, 'rect', { x: REGION_START, y: 0, width: LANE_END, height: 30, fill: 'url(#greyFill)' });
[6, 21].forEach(y => {
    drawWave(bass, y, 5, '#b08084', 1);
    add(bass, 'path', { d: `M${REGION_START} ${y + 0.5}H${LANE_END}`, stroke: '#444c50' });
    let dots = '';
    for (let x = REGION_START; x < LANE_END; x += 3) {
        if (x > 430 && x < 540) continue;
        dots += `M${x + (x * 7) % 3} ${y + ((x * x * 13) % 11) - 5}h1v1h-1z`;
    }
    add(bass, 'path', { d: dots, fill: '#3b4347' });
});

function audioLane(svg, height, centres, amp) {
    add(svg, 'rect', { x: REGION_START, y: 0, width: LANE_END, height: height, fill: '#272b30' });
    centres.forEach(c => drawWave(svg, c, amp, '#30373b', 2));
}

const azimuth = byId('azimuthLane');
audioLane(azimuth, 148, [35, 110], 30);
automation(azimuth, [[0, 74], [540, 74], [740, 146], [1140, 74], [LANE_END, 74]], 147);

const gain = byId('gainLane');
audioLane(gain, 196, [47, 146], 40);
automation(gain, [[0, 98], [540, 98], [740, 194], [1140, 98], [LANE_END, 98]], 195, 4);

// master meter with its dB scale
const scale = byId('meterScale');
const labels = {
    17: '+3', 34: '+0', 50: '-3', 61: '-5', 89: '-10', 116: '-15', 133: '-18',
    144: '-20', 166: '-25', 188: '-30', 221: '-40', 238: '-50', 249: 'dBFS'
};
const minor = [6, 12, 23, 28, 39, 45, 56, 67, 72, 78, 83, 94, 100, 105, 111, 122, 127, 139];
const meterFill = add(add(scale, 'defs', {}), 'linearGradient', { id: 'meterFill', x2: 0, y2: 1 });
add(meterFill, 'stop', { offset: 0, 'stop-color': '#1f2225' });
add(meterFill, 'stop', { offset: 1, 'stop-color': '#474c52' });
minor.forEach(y => {
    const colour = y < 34 || y === 83 ? '#a03030' : '#777';
    add(scale, 'path', { d: `M4 ${y + 0.5}H25`, stroke: colour });
});
Object.keys(labels).forEach(key => {
    const y = Number(key);
    const unit = labels[key] === 'dBFS';
    const red = y <= 34;
    add(scale, 'path', { d: `M4 ${y + 0.5}H26`, stroke: red ? '#e03030' : unit ? '#777' : '#ddd' });
    add(scale, 'text', {
        x: 46, y: unit ? y + 3 : y + 4, 'text-anchor': 'end',
        'font-size': unit ? 8 : 10,
        fill: red ? '#c83232' : unit ? '#999' : '#d0d0d0'
    }, labels[key]);
});
[7, 15].forEach(x => {
    add(scale, 'rect', { x: x + 0.5, y: 0.5, width: 6, height: 253, fill: 'url(#meterFill)', stroke: '#000' });
});
```
